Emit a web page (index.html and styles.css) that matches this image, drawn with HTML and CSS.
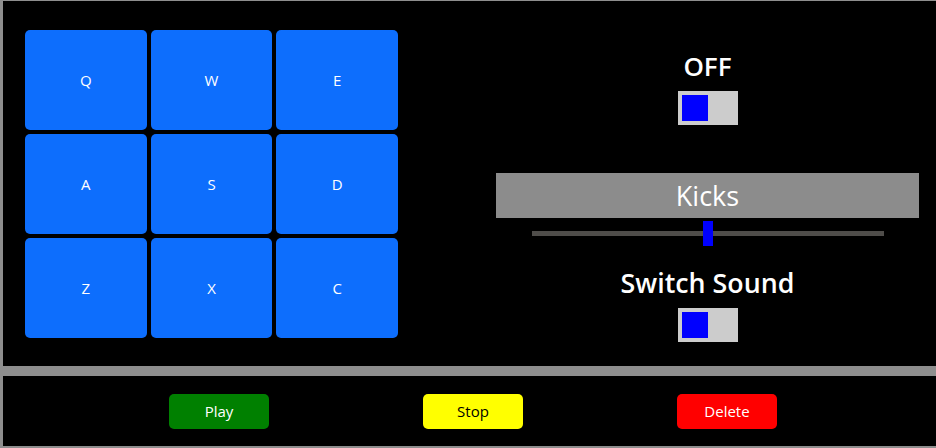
FILE: index.html
```html
<!DOCTYPE html>
<html>
<head>
<meta charset="utf-8">
<link rel="stylesheet" href="styles.css">
</head>
<body>
  <section class="machine">
    <div class="pads">
      <button class="pad">Q</button>
      <button class="pad">W</button>
      <button class="pad">E</button>
      <button class="pad">A</button>
      <button class="pad">S</button>
      <button class="pad">D</button>
      <button class="pad">Z</button>
      <button class="pad">X</button>
      <button class="pad">C</button>
    </div>
    <div class="controls">
      <h3 class="label power-label">OFF</h3>
      <div class="toggle power-toggle"><span class="knob"></span></div>
      <div class="display">Kicks</div>
      <input class="volume" type="range" min="0" max="100" value="50">
      <h3 class="label bank-label">Switch Sound</h3>
      <div class="toggle bank-toggle"><span class="knob"></span></div>
    </div>
  </section>
  <section class="recorder">
    <button class="action play">Play</button>
    <button class="action stop">Stop</button>
    <button class="action delete">Delete</button>
  </section>
</body>
</html>
```

FILE: styles.css
```css
* { box-sizing: border-box; }

html, body {
  margin: 0;
  height: 448px;
  overflow: hidden;
}

body {
  background: #8e8e8e;
  padding: 1px 0 2px 3px;
  font-family: "Open Sans", "Noto Sans", sans-serif;
  color: #fff;
}

.machine {
  background: #000;
  height: 365px;
  display: flex;
  align-items: flex-start;
  padding: 29px 0 0 22px;
}

.pads {
  width: 373px;
  display: grid;
  grid-template-columns: repeat(3, 1fr);
  grid-auto-rows: 100px;
  gap: 4px;
}

.pad {
  border: none;
  border-radius: 5px;
  background: #0d6efd;
  color: #fff;
  font-family: "Open Sans", sans-serif;
  font-size: 15px;
  padding: 0;
}

.controls {
  margin-left: 98px;
  width: 423px;
  display: flex;
  flex-direction: column;
  align-items: center;
}

.label {
  margin: 0;
  font-size: 26px;
  font-weight: 600;
  line-height: 34px;
  height: 34px;
}

.power-label { margin-top: 19px; }
.power-toggle { margin-top: 8px; }

.bank-label { margin-top: 20px; font-size: 26.8px; }
.bank-toggle { margin-top: 8px; }

.toggle {
  width: 60px;
  height: 34px;
  background: #ccc;
  padding: 4px;
  display: flex;
}

.knob {
  width: 26px;
  height: 26px;
  background: #0000ff;
}

.display {
  margin-top: 48px;
  width: 423px;
  height: 45px;
  background: #8c8c8c;
  color: #fff;
  font-size: 27px;
  line-height: 45px;
  text-align: center;
}

.volume {
  -webkit-appearance: none;
  appearance: none;
  margin: 3px 0 0 0;
  width: 352px;
  height: 25px;
  background: transparent;
  padding: 0;
}

.volume::-webkit-slider-runnable-track {
  height: 5px;
  background: #4f4d4a;
}

.volume::-webkit-slider-thumb {
  -webkit-appearance: none;
  appearance: none;
  width: 10px;
  height: 25px;
  background: #0000ff;
  border: none;
  border-radius: 0;
  margin-top: -10px;
}

.recorder {
  margin-top: 10px;
  height: 70px;
  background: #000;
  display: flex;
  align-items: center;
  justify-content: center;
  gap: 154px;
  padding-left: 7px;
}

.action {
  width: 100px;
  height: 35px;
  border: none;
  border-radius: 5px;
  font-family: "Open Sans", sans-serif;
  font-size: 15px;
  padding: 0;
}

.play { background: #008000; color: #fff; }
.stop { background: #ffff00; color: #000; }
.delete { background: #ff0000; color: #fff; }
```
